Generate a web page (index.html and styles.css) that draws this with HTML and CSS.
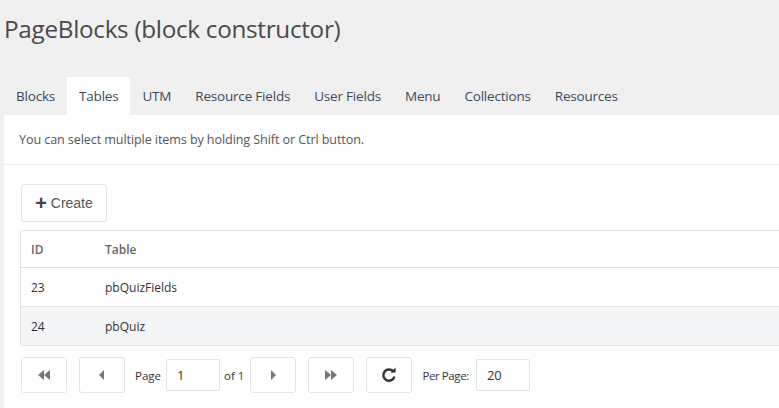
FILE: index.html
```html
<!DOCTYPE html>
<html lang="en">
<head>
  <meta charset="UTF-8" />
  <title>PageBlocks (block constructor)</title>
  <link rel="stylesheet" href="styles.css">
</head>
<body>
  <h1 class="page-title">PageBlocks (block constructor)</h1>

  <nav class="tabs">
    <a class="tab">Blocks</a>
    <a class="tab active">Tables</a>
    <a class="tab">UTM</a>
    <a class="tab">Resource Fields</a>
    <a class="tab">User Fields</a>
    <a class="tab">Menu</a>
    <a class="tab">Collections</a>
    <a class="tab">Resources</a>
  </nav>

  <section class="panel">
    <div class="hint">You can select multiple items by holding Shift or Ctrl button.</div>

    <div class="panel-body">
      <button class="btn create"><span class="plus">+</span> Create</button>

      <div class="grid">
        <div class="grid-row head">
          <div class="col-id">ID</div>
          <div class="col-name">Table</div>
        </div>
        <div class="grid-row">
          <div class="col-id">23</div>
          <div class="col-name">pbQuizFields</div>
        </div>
        <div class="grid-row alt">
          <div class="col-id">24</div>
          <div class="col-name">pbQuiz</div>
        </div>
      </div>

      <div class="pager">
        <button class="btn pbtn">
          <svg width="14" height="12" viewBox="0 0 14 12"><path d="M7 1 L1 6 L7 11 Z M13 1 L7 6 L13 11 Z" fill="#777"/></svg>
        </button>
        <button class="btn pbtn">
          <svg width="8" height="12" viewBox="0 0 8 12"><path d="M6 1 L1 6 L6 11 Z" fill="#777"/></svg>
        </button>
        <span class="plabel page">Page</span>
        <input class="pinput" value="1">
        <span class="plabel of">of 1</span>
        <button class="btn pbtn">
          <svg width="8" height="12" viewBox="0 0 8 12"><path d="M2 1 L7 6 L2 11 Z" fill="#777"/></svg>
        </button>
        <button class="btn pbtn">
          <svg width="14" height="12" viewBox="0 0 14 12"><path d="M1 1 L7 6 L1 11 Z M7 1 L13 6 L7 11 Z" fill="#777"/></svg>
        </button>
        <button class="btn pbtn">
          <svg width="16" height="16" viewBox="0 0 16 16"><path d="M12.6 5 A5.6 5.6 0 1 0 13.4 9.4" fill="none" stroke="#333" stroke-width="2.4"/><path d="M9.5 5.6 L14.6 5.6 L14.6 0.6 Z" fill="#333"/></svg>
        </button>
        <span class="plabel per">Per Page:</span>
        <input class="pinput" value="20">
      </div>
    </div>
  </section>
</body>
</html>
```

FILE: styles.css
```css
body {
  margin: 0;
  background: #f0f0f0;
  font-family: 'Open Sans', 'Noto Sans', sans-serif;
  color: #555;
}
.page-title {
  margin: 0;
  padding: 12px 0 0 4px;
  height: 77px;
  box-sizing: border-box;
  font-size: 24.3px;
  font-weight: 400;
  color: #4a4a4a;
  letter-spacing: -0.3px;
}
.tabs {
  display: flex;
  padding: 0 4px;
}
.tab {
  height: 38px;
  line-height: 38px;
  padding: 0 12px;
  font-size: 13.5px;
  color: #3b4a5c;
  letter-spacing: -0.2px;
}
.tab.active {
  background: #fff;
}
.panel {
  background: #fff;
  margin-left: 4px;
  min-height: calc(100vh - 115px);
}
.hint {
  height: 49px;
  line-height: 50px;
  padding-left: 15px;
  font-size: 12.6px;
  color: #555;
  border-bottom: 1px solid #eee;
  letter-spacing: -0.1px;
}
.panel-body {
  padding: 19px 0 0 16px;
}
.btn {
  background: #fff;
  border: 1px solid #e4e4e4;
  border-radius: 3px;
  cursor: pointer;
  box-sizing: border-box;
}
.create {
  margin-left: 1px;
  width: 86px;
  height: 38px;
  font-family: 'Liberation Sans', Arial, sans-serif;
  font-size: 14px;
  color: #555;
  padding: 0;
}
.create .plus {
  font-size: 20px;
  font-weight: bold;
  color: #444;
  vertical-align: -2px;
}
.grid {
  margin-top: 8px;
  border: 1px solid #e4e4e4;
  border-right: none;
  border-radius: 3px 0 0 3px;
  font-size: 12px;
}
.grid-row {
  display: flex;
  height: 38px;
  align-items: center;
  border-top: 1px solid #e4e4e4;
  color: #333;
}
.grid-row.head {
  border-top: none;
  height: 36px;
  font-weight: 600;
  color: #666;
}
.grid-row.alt {
  background: #f4f5f7;
}
.col-id {
  width: 74px;
  padding-left: 10px;
}
.pager {
  display: flex;
  align-items: center;
  padding: 11px 0 0 1px;
  font-size: 11.5px;
}
.pbtn {
  width: 46px;
  height: 36px;
  display: flex;
  align-items: center;
  justify-content: center;
  margin-right: 12px;
  padding: 0;
}
.plabel {
  color: #333;
  margin-right: 5px;
}
.plabel.page {
  margin-left: -2px;
}
.plabel.of {
  margin-right: 6px;
  margin-left: -1px;
}
.plabel.per {
  margin-left: -2px;
  margin-right: 7px;
  letter-spacing: -0.4px;
}
.pinput {
  width: 54px;
  height: 32px;
  box-sizing: border-box;
  border: 1px solid #e4e4e4;
  border-radius: 2px;
  padding: 0 10px;
  margin-right: 5px;
  font-family: inherit;
  font-size: 13px;
  color: #333;
}
```
